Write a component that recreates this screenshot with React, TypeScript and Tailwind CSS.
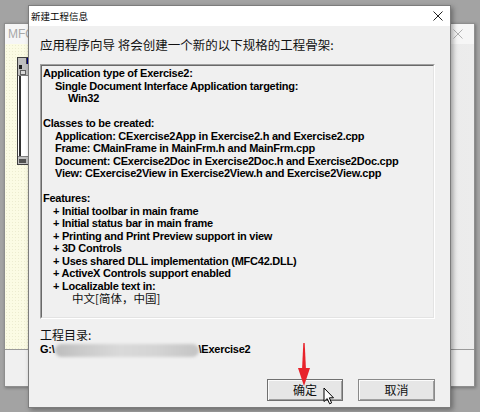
import React from 'react';

type Line = { text: string; indent: string; cjk?: boolean };

const infoLines: Line[] = [
  { text: 'Application type of Exercise2:', indent: 'pl-0' },
  { text: 'Single Document Interface Application targeting:', indent: 'pl-[12px]' },
  { text: 'Win32', indent: 'pl-[25px]' },
  { text: '', indent: 'pl-0' },
  { text: 'Classes to be created:', indent: 'pl-0' },
  { text: 'Application: CExercise2App in Exercise2.h and Exercise2.cpp', indent: 'pl-[12px]' },
  { text: 'Frame: CMainFrame in MainFrm.h and MainFrm.cpp', indent: 'pl-[12px]' },
  { text: 'Document: CExercise2Doc in Exercise2Doc.h and Exercise2Doc.cpp', indent: 'pl-[12px]' },
  { text: 'View: CExercise2View in Exercise2View.h and Exercise2View.cpp', indent: 'pl-[12px]' },
  { text: '', indent: 'pl-0' },
  { text: 'Features:', indent: 'pl-0' },
  { text: '+ Initial toolbar in main frame', indent: 'pl-[10px]' },
  { text: '+ Initial status bar in main frame', indent: 'pl-[10px]' },
  { text: '+ Printing and Print Preview support in view', indent: 'pl-[10px]' },
  { text: '+ 3D Controls', indent: 'pl-[10px]' },
  { text: '+ Uses shared DLL implementation (MFC42.DLL)', indent: 'pl-[10px]' },
  { text: '+ ActiveX Controls support enabled', indent: 'pl-[10px]' },
  { text: '+ Localizable text in:', indent: 'pl-[10px]' },
  { text: '中文[简体，中国]', indent: 'pl-[29px]', cjk: true },
];

const CloseX: React.FC<{ color: string; size: number }> = ({ color, size }) => (
  <svg width={size} height={size} viewBox="0 0 10 10">
    <path d="M0.5 0.5 L9.5 9.5 M9.5 0.5 L0.5 9.5" stroke={color} strokeWidth="1" />
  </svg>
);

// window behind the dialog (MFC AppWizard step)
const BackWindow: React.FC = () => (
  <div className="absolute left-[4px] top-[23px] w-[471px] h-[364px] flex flex-col border border-[#8e8e8e] bg-[#ececec] shadow-[1px_1px_3px_rgba(0,0,0,0.3)]">
    <div className="h-[20px] flex items-center justify-between bg-[#f6f6f6] pl-[3px] pr-[11px]">
      <span className="text-[12px] text-[#a8a8a8] font-['Liberation_Sans',sans-serif]">MFC</span>
      <CloseX color="#b0b0b0" size={10} />
    </div>
    <div className="flex-1 flex flex-col">
      <div className="flex-1 flex">
        <div className="w-[200px] bg-[#fbfbe4] bg-[radial-gradient(#ececd0_0.6px,transparent_0.8px)] bg-[length:3px_3px] pl-[12px] pt-[13px]">
          <div className="w-[150px] h-[108px] border border-[#404040] bg-white flex flex-col">
            <div className="h-[6px] flex">
              <div className="w-[9px] bg-[#c0c0c0] border-r border-[#404040]" />
              <div className="flex-1 bg-[#000080]" />
            </div>
            <div className="h-[5px] bg-[#c0c0c0] pl-[1px] flex items-center">
              <div className="w-[3px] h-[4px] bg-[#202020]" />
            </div>
            <div className="h-[7px] bg-[#c0c0c0] border-b border-[#808080] pl-[2px] pt-[1px]">
              <div className="w-[6px] h-[5px] border border-[#606060] bg-[#d8d8d8]" />
            </div>
            <div className="flex-1 border-l-2 border-[#303030] ml-[1px]" />
            <div className="h-[8px] bg-[#c0c0c0] border-t border-[#808080] pl-[1px] flex items-center">
              <div className="w-[7px] h-[4px] bg-[#505050]" />
            </div>
          </div>
        </div>
        <div className="flex-1 bg-[linear-gradient(90deg,#e2e2e2,#ececec)]" />
      </div>
      <div className="h-px bg-[#9a9a9a]" />
      <div className="h-[36px] bg-[#f0f0f0]" />
    </div>
  </div>
);

const WinButton: React.FC<{ label: string; isDefault?: boolean }> = ({ label, isDefault }) => (
  <button
    className={
      isDefault
        ? 'w-[76px] h-[22px] bg-[#e6e6e6] border border-[#707070] shadow-[inset_1px_1px_0_#fbfbfb,inset_-1px_-1px_0_#a0a0a0] text-[12px] text-[#111] font-["Noto_Sans_CJK_SC",sans-serif] leading-none flex items-center justify-center'
        : 'w-[77px] h-[22px] bg-[#e6e6e6] border border-[#8a8a8a] shadow-[inset_1px_1px_0_#fbfbfb,inset_-1px_-1px_0_#a0a0a0] text-[12px] text-[#111] font-["Noto_Sans_CJK_SC",sans-serif] leading-none flex items-center justify-center'
    }
  >
    {label}
  </button>
);

const App: React.FC = () => {
  return (
    <div className="relative w-[480px] h-[412px] overflow-hidden bg-[#a3a3a3]">
      <BackWindow />

      {/* 新建工程信息 dialog */}
      <div className="absolute left-[28px] top-[5px] w-[423px] h-[403px] flex flex-col border border-[#7c7c7c] shadow-[2px_2px_5px_rgba(0,0,0,0.35)]">
        <div className="h-[20px] bg-white flex items-center justify-between pl-[2px] pr-[7px]">
          <span className="text-[9.5px] text-black font-['Noto_Sans_CJK_SC',sans-serif]">新建工程信息</span>
          <CloseX color="#222" size={10} />
        </div>
        <div className="flex-1 flex flex-col bg-[#f0f0f0] pl-[11px] pr-[15px] pt-[11px]">
          <div className="h-[16px] leading-[16px] text-[12.5px] text-[#111] font-['Noto_Sans_CJK_SC',sans-serif] whitespace-nowrap">
            应用程序向导 将会创建一个新的以下规格的工程骨架:
          </div>

          <div className="mt-[11px] h-[255px] border-t border-l border-[#a0a0a0] border-r border-b border-r-white border-b-white">
            <div className="h-full border-t border-l border-[#696969] border-r border-b border-r-[#e3e3e3] border-b-[#e3e3e3] pt-[1px] pl-[1px]">
              {infoLines.map((line, i) => (
                <div
                  key={i}
                  className={
                    line.cjk
                      ? `h-[12.5px] leading-[12.5px] whitespace-pre text-[11.5px] text-[#111] font-['Noto_Sans_CJK_SC',sans-serif] ${line.indent}`
                      : `h-[12.5px] leading-[12.5px] whitespace-pre text-[11px] tracking-[-0.25px] font-bold text-black font-['Liberation_Sans',sans-serif] ${line.indent}`
                  }
                >
                  {line.text}
                </div>
              ))}
            </div>
          </div>

          <div className="mt-[9px] h-[13px] leading-[13px] text-[12px] text-[#111] font-['Noto_Sans_CJK_SC',sans-serif]">
            工程目录:
          </div>
          <div className="mt-[2px] h-[12px] leading-[12px] flex items-center text-[11px] tracking-[-0.25px] font-bold text-black font-['Liberation_Sans',sans-serif] whitespace-pre">
            <span>G:\</span>
            <span className="w-[144px] h-[13px] mt-[2px] rounded-full blur-[1.5px] bg-[linear-gradient(90deg,#bdbdbd,#cbcbcb_20%,#d9d9d9_45%,#d4d4d4_70%,#c4c4c4)]" />
            <span>\Exercise2</span>
          </div>

          <div className="mt-[24px] flex justify-end gap-[15px]">
            <WinButton label="确定" isDefault />
            <WinButton label="取消" />
          </div>
        </div>
      </div>

      {/* red marker arrow */}
      <svg className="absolute left-[297px] top-[342px]" width="14" height="46" viewBox="0 0 14 46">
        <polygon points="6.3,1 7.7,1 9,28 5,28" fill="#e8232b" />
        <polygon points="1,26 13,26 7,44" fill="#e8232b" />
      </svg>

      {/* mouse pointer */}
      <svg className="absolute left-[323px] top-[387px]" width="12" height="18" viewBox="0 0 12 18">
        <path d="M1 1 L1 14.5 L4.2 11.6 L6.6 16.8 L8.6 15.9 L6.3 10.8 L10.5 10.8 Z" fill="white" stroke="black" strokeWidth="1" strokeLinejoin="round" />
      </svg>
    </div>
  );
};

export default App;
